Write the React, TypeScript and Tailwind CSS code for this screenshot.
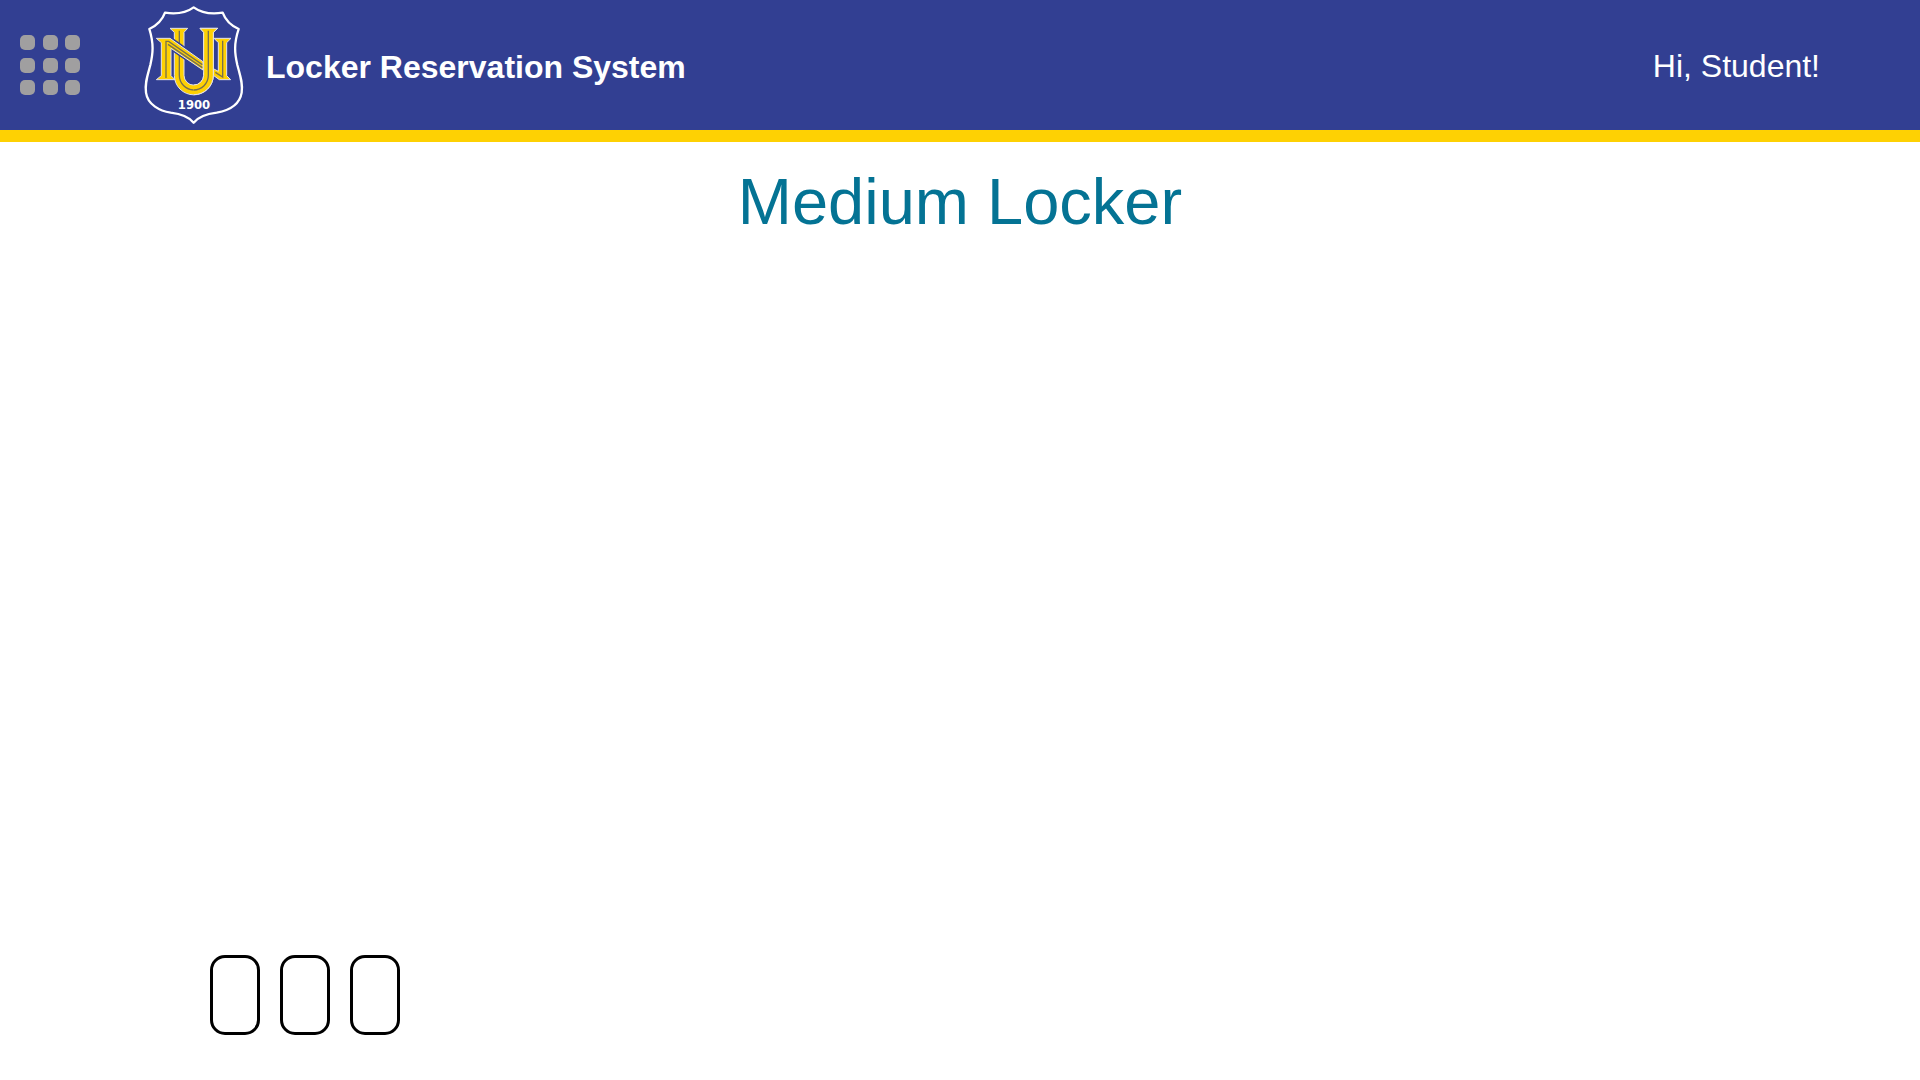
const lockers = [1, 2, 3];
const menuDots = [1, 2, 3, 4, 5, 6, 7, 8, 9];

const letterU =
  "M90 85H143L132 97V226A29.500 29.500 0 0 0 191 226V97L180 85H233L220 97V226A58.500 58.500 0 0 1 103 226V97Z";
const letterUFront =
  "M180 85H233L220 97V226A58.500 58.500 0 0 1 161 284V255A29.500 29.500 0 0 0 191 226V97Z";
const letterN =
  "M49 115H90L189 185V210L93 145V227L105 239H49L64 227V128Z";
const letterNEnd = "M222 115H273L260 128V227L272 239H238L220 226V206L235 214V128Z";

function Crest() {
  return (
    <svg viewBox="0 0 330 390" className="h-[130px] w-[110px] shrink-0" role="img" aria-label="NU 1900">
      <path
        d="M161 22C143 35 114 44 75 38C68 57 50 77 28 87C42 132 39 160 31 195C22 228 14 250 18 278C23 315 60 333 92 338C124 342 148 352 161 368C174 352 198 342 230 338C264 332 299 315 305 278C309 250 301 228 292 195C284 160 281 132 296 87C273 77 255 57 248 38C210 44 179 35 161 22Z"
        fill="none"
        stroke="#fff"
        strokeWidth="7"
        strokeLinejoin="round"
      />
      <g fill="#fed103" stroke="#e3e2ea" strokeWidth="3">
        <path d={letterNEnd} />
        <path d={letterU} />
      </g>
      <g fill="none" stroke="#77704f" strokeWidth="4">
        <path d="M118 92V226A44 44 0 0 0 161 270" />
        <path d="M248 122V231L226 217" />
      </g>
      <path d="M90 115L189 185V210L93 145Z" fill="#323f92" stroke="#323f92" strokeWidth="11" />
      <path d={letterN} fill="#fed103" stroke="#e3e2ea" strokeWidth="3" />
      <path d="M78 234V124H86L187 194M84 133L187 203" fill="none" stroke="#77704f" strokeWidth="4" />
      <path d={letterUFront} fill="#fed103" />
      <path
        d="M161 255A29.500 29.500 0 0 0 191 226V97L180 85H233L220 97V226A58.500 58.500 0 0 1 161 284"
        fill="none"
        stroke="#e3e2ea"
        strokeWidth="3"
      />
      <path d="M161 270A44 44 0 0 0 205 226V92" fill="none" stroke="#77704f" strokeWidth="4" />
      <text x="162" y="326" textAnchor="middle" fill="#fff" fontSize="35" fontWeight="700" fontFamily="DejaVu Sans, sans-serif">
        1900
      </text>
    </svg>
  );
}

export default function App() {
  return (
    <div className="flex min-h-screen flex-col bg-white font-['Liberation_Sans',Arial,sans-serif]">
      <header className="flex items-center border-b-12 border-[#fed103] bg-[#323f92] pr-[100px] pl-5 text-[32px] leading-10 text-white">
        <button
          type="button"
          aria-label="Menu"
          className="mr-15 grid size-15 grid-cols-[repeat(3,15px)] content-between justify-between"
        >
          {menuDots.map((dot) => (
            <span key={dot} className="size-[15px] rounded-[5px] bg-[#a09fa0]" />
          ))}
        </button>
        <Crest />
        <p className="ml-4 grow pt-1 font-bold">Locker Reservation System</p>
        <p className="pt-0.5">Hi, Student!</p>
      </header>
      <main className="flex grow flex-col justify-between pt-6 pb-[45px]">
        <h1 className="text-center text-[65px] leading-[72px] text-[#047394]">Medium Locker</h1>
        <div className="flex gap-5 pl-[210px]">
          {lockers.map((locker) => (
            <button
              key={locker}
              type="button"
              aria-label={`Locker ${locker}`}
              className="h-20 w-[50px] rounded-[15px] border-3 border-black bg-white"
            />
          ))}
        </div>
      </main>
    </div>
  );
}
